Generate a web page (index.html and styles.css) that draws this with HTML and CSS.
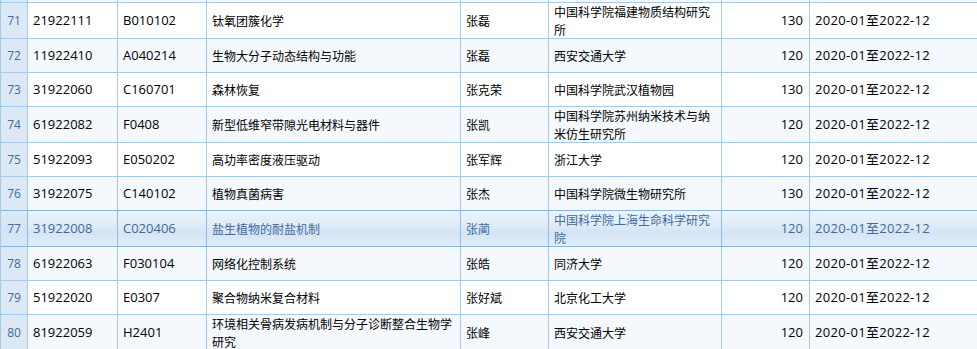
FILE: index.html
```html
<!DOCTYPE html>
<html lang="zh-CN">
<head>
<meta charset="utf-8">
<title>项目列表</title>
<link rel="stylesheet" href="styles.css">
</head>
<body>
<div class="viewport">
  <div class="grid">
    <div class="row even">
      <div class="cell rn"></div><div class="cell num"></div><div class="cell num"></div><div class="cell"></div><div class="cell"></div><div class="cell"></div><div class="cell amt"></div><div class="cell date"></div>
    </div>
    <div class="row odd">
      <div class="cell rn">71</div><div class="cell num">21922111</div><div class="cell num">B010102</div><div class="cell">钛氧团簇化学</div><div class="cell">张磊</div><div class="cell">中国科学院福建物质结构研究所</div><div class="cell amt">130</div><div class="cell date">2020-01至2022-12</div>
    </div>
    <div class="row even">
      <div class="cell rn">72</div><div class="cell num">11922410</div><div class="cell num">A040214</div><div class="cell">生物大分子动态结构与功能</div><div class="cell">张磊</div><div class="cell">西安交通大学</div><div class="cell amt">120</div><div class="cell date">2020-01至2022-12</div>
    </div>
    <div class="row odd">
      <div class="cell rn">73</div><div class="cell num">31922060</div><div class="cell num">C160701</div><div class="cell">森林恢复</div><div class="cell">张克荣</div><div class="cell">中国科学院武汉植物园</div><div class="cell amt">130</div><div class="cell date">2020-01至2022-12</div>
    </div>
    <div class="row even">
      <div class="cell rn">74</div><div class="cell num">61922082</div><div class="cell num">F0408</div><div class="cell">新型低维窄带隙光电材料与器件</div><div class="cell">张凯</div><div class="cell">中国科学院苏州纳米技术与纳米仿生研究所</div><div class="cell amt">120</div><div class="cell date">2020-01至2022-12</div>
    </div>
    <div class="row odd">
      <div class="cell rn">75</div><div class="cell num">51922093</div><div class="cell num">E050202</div><div class="cell">高功率密度液压驱动</div><div class="cell">张军辉</div><div class="cell">浙江大学</div><div class="cell amt">120</div><div class="cell date">2020-01至2022-12</div>
    </div>
    <div class="row even">
      <div class="cell rn">76</div><div class="cell num">31922075</div><div class="cell num">C140102</div><div class="cell">植物真菌病害</div><div class="cell">张杰</div><div class="cell">中国科学院微生物研究所</div><div class="cell amt">130</div><div class="cell date">2020-01至2022-12</div>
    </div>
    <div class="row odd hover">
      <div class="cell rn">77</div><div class="cell num">31922008</div><div class="cell num">C020406</div><div class="cell">盐生植物的耐盐机制</div><div class="cell">张蔺</div><div class="cell">中国科学院上海生命科学研究院</div><div class="cell amt">120</div><div class="cell date">2020-01至2022-12</div>
    </div>
    <div class="row even">
      <div class="cell rn">78</div><div class="cell num">61922063</div><div class="cell num">F030104</div><div class="cell">网络化控制系统</div><div class="cell">张皓</div><div class="cell">同济大学</div><div class="cell amt">120</div><div class="cell date">2020-01至2022-12</div>
    </div>
    <div class="row odd">
      <div class="cell rn">79</div><div class="cell num">51922020</div><div class="cell num">E0307</div><div class="cell">聚合物纳米复合材料</div><div class="cell">张好斌</div><div class="cell">北京化工大学</div><div class="cell amt">120</div><div class="cell date">2020-01至2022-12</div>
    </div>
    <div class="row even">
      <div class="cell rn">80</div><div class="cell num">81922059</div><div class="cell num">H2401</div><div class="cell">环境相关骨病发病机制与分子诊断整合生物学研究</div><div class="cell">张峰</div><div class="cell">西安交通大学</div><div class="cell amt">120</div><div class="cell date">2020-01至2022-12</div>
    </div>
  </div>
</div>
</body>
</html>
```
FILE: styles.css
```css
html, body {
  margin: 0;
  padding: 0;
  background: #ffffff;
  overflow: hidden;
}

.viewport {
  width: 977px;
  height: 349px;
  overflow: hidden;
}

.grid {
  width: 1010px;
  margin-top: -31px;
  border-left: 1px solid #a6c9e5;
  font-family: "Noto Sans CJK SC", "Open Sans", sans-serif;
  font-size: 12px;
  color: #000;
}

.row {
  display: grid;
  grid-template-columns: 27px 90px 89px 254px 88px 173px 88px 200px;
  border-bottom: 1px solid #a6c9e5;
}

.row.odd { background: #ffffff; }
.row.even { background: #f5f9fd; }

.row.hover {
  background: linear-gradient(to bottom, #eaf3fc 0%, #e0ecf8 40%, #d3e4f4 62%, #e3eef9 100%);
  border-bottom-color: #84b6e6;
  margin-top: -1px;
  border-top: 1px solid #84b6e6;
  color: #41699a;
}

.row.hover .cell { border-right-color: #8fbbe6; }

.cell {
  box-sizing: border-box;
  min-height: 33px;
  padding: 0 5px;
  border-right: 1px solid #a6c9e5;
  display: flex;
  align-items: center;
  line-height: 17.5px;
  overflow: hidden;
}

.cell.rn {
  justify-content: center;
  padding: 0;
  background: #dce9f5;
  color: #3f6c9c;
  font-family: "Open Sans", sans-serif;
  font-size: 12px;
}

.row.hover .cell.rn {
  background: linear-gradient(to bottom, #dce9f6 0%, #d4e4f3 55%, #dae8f5 100%);
}

.cell.num {
  font-family: "Open Sans", sans-serif;
  font-size: 13px;
}

.cell.amt {
  justify-content: flex-end;
  padding-right: 6px;
  font-family: "Open Sans", sans-serif;
  font-size: 13px;
}

.cell.date {
  font-family: "Open Sans", "Noto Sans CJK SC", sans-serif;
  font-size: 13px;
  letter-spacing: 0.3px;
}
```
